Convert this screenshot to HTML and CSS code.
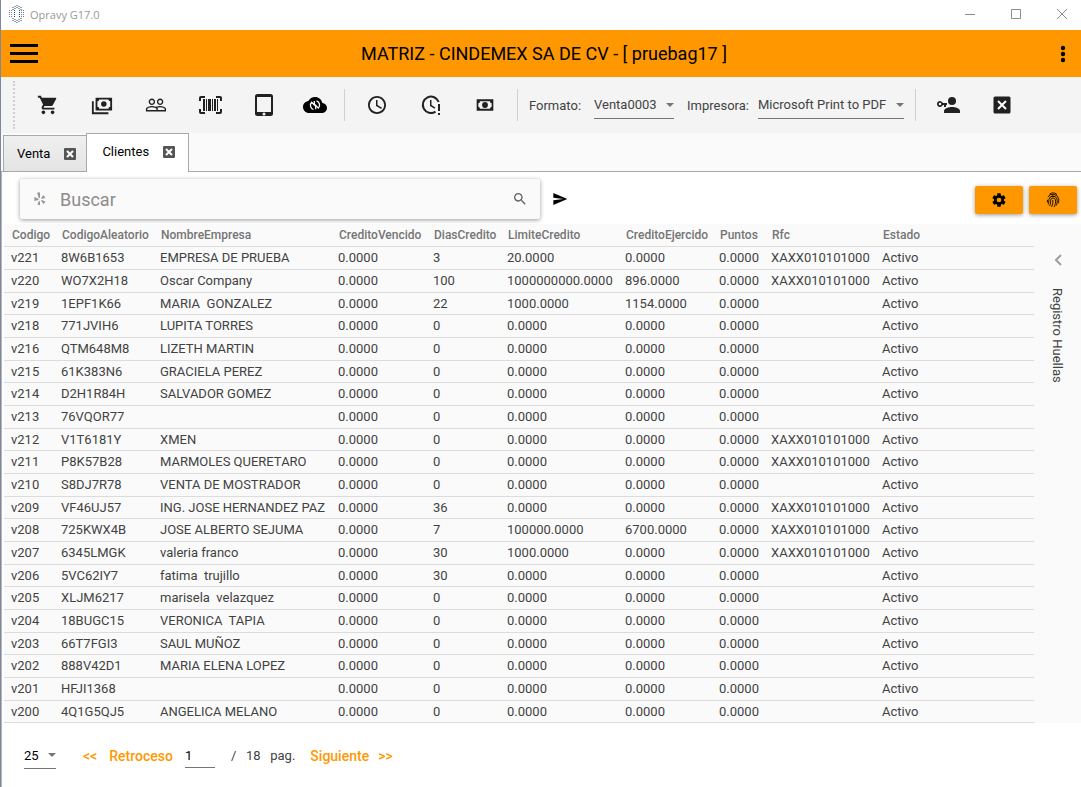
FILE: index.html
```html
<!DOCTYPE html>
<html lang="es">
<head>
    <meta charset="UTF-8">
    <meta name="viewport" content="width=device-width, initial-scale=1.0">
    <title>Opravy G17.0</title>
    <link rel="stylesheet" href="styles.css">
</head>
<body>

<div class="window">
    <div class="titlebar">
        <svg class="logo" width="18" height="18" viewBox="0 0 18 18" fill="none" stroke="#2d4a5c">
            <g stroke-dasharray="1 1">
                <path d="M5 2v3M7 1v3M9 0v3M11 1v3M13 2v3M5 13v3M7 14v3M9 15v3M11 14v3M13 13v3"/>
                <path d="M1 5.500h4M1 7.500h4M1 9.500h4M1 11.500h4M13 5.500h4M13 7.500h4M13 9.500h4M13 11.500h4" stroke="#6f8896"/>
                <path d="M6.500 5v8M11.500 5v8"/>
            </g>
        </svg>
        <span class="app-name">Opravy G17.0</span>
        <button class="win-btn" aria-label="Minimizar"><svg width="12" height="12" viewBox="0 0 12 12"><path d="M1 6.500h10"/></svg></button>
        <button class="win-btn" aria-label="Maximizar"><svg width="12" height="12" viewBox="0 0 12 12"><path d="M1.500 1.500h9v9h-9z"/></svg></button>
        <button class="win-btn" aria-label="Cerrar"><svg width="12" height="12" viewBox="0 0 12 12"><path d="M1 1l10 10M11 1L1 11"/></svg></button>
    </div>

    <header class="header">
        <button class="menu-btn" aria-label="Menu">
            <svg width="28" height="20" viewBox="0 0 28 20"><path d="M0 0h28v3H0zM0 8h28v3H0zM0 16h28v3H0z"/></svg>
        </button>
        <h1>MATRIZ - CINDEMEX SA DE CV - [ pruebag17 ]</h1>
        <button class="more-btn" aria-label="Opciones">
            <svg width="6" height="18" viewBox="0 0 6 18"><circle cx="3" cy="3" r="2.200"/><circle cx="3" cy="9" r="2.200"/><circle cx="3" cy="15" r="2.200"/></svg>
        </button>
    </header>

    <div class="toolbar">
        <span class="grip"></span>
        <button aria-label="Venta"><svg width="22" height="22" viewBox="0 0 24 24"><path d="M7 18c-1.100 0-1.990.9-1.990 2S5.900 22 7 22s2-.9 2-2-.9-2-2-2zM1 2v2h2l3.600 7.590-1.350 2.450c-.16.28-.25.61-.25.96 0 1.100.9 2 2 2h12v-2H7.420c-.14 0-.25-.11-.25-.25l.03-.12.9-1.630h7.450c.75 0 1.410-.41 1.750-1.030l3.580-6.490A1 1 0 0 0 20 4H5.210l-.94-2H1zm16 16c-1.100 0-1.990.9-1.990 2s.89 2 1.990 2 2-.9 2-2-.9-2-2-2z"/></svg></button>
        <button aria-label="Cobros"><svg width="22" height="22" viewBox="0 0 24 24"><path fill-rule="evenodd" d="M5 4h18v14H5zM9 6a2 2 0 0 1-2 2v6a2 2 0 0 1 2 2h10a2 2 0 0 1 2-2V8a2 2 0 0 1-2-2zM14 8a3 3 0 1 1 0 6 3 3 0 0 1 0-6zM1 8h2v12h16v2H1z"/></svg></button>
        <button aria-label="Clientes"><svg width="22" height="22" viewBox="0 0 24 24"><path d="M16.500 13c-1.200 0-3.070.34-4.500 1-1.430-.67-3.300-1-4.500-1C5.330 13 1 14.080 1 16.250V19h22v-2.750c0-2.170-4.330-3.250-6.500-3.250zm-4 4.500h-10v-1.250c0-.54 2.560-1.750 5-1.750s5 1.210 5 1.750v1.250zm9 0H14v-1.250c0-.46-.2-.86-.52-1.220.88-.3 1.960-.53 3.020-.53 2.440 0 5 1.210 5 1.750v1.250zM7.500 12c1.930 0 3.500-1.570 3.500-3.500S9.430 5 7.500 5 4 6.570 4 8.500 5.570 12 7.500 12zm0-5.500c1.100 0 2 .9 2 2s-.9 2-2 2-2-.9-2-2 .9-2 2-2zm9 5.500c1.930 0 3.500-1.570 3.500-3.500S18.430 5 16.500 5 13 6.570 13 8.500s1.570 3.500 3.500 3.500zm0-5.500c1.100 0 2 .9 2 2s-.9 2-2 2-2-.9-2-2 .9-2 2-2z"/></svg></button>
        <button aria-label="Codigo de barras"><svg width="24" height="24" viewBox="0 0 24 24"><path d="M5 6h2v12H5zm3 0h1v12H8zm2 0h3v12h-3zm4 0h1v12h-1zm2 0h2v12h-2zm3 0h1v12h-1zM3 5v3H1V5a2 2 0 0 1 2-2h4v2zm19-2a2 2 0 0 1 2 2v3h-2V5h-4V3zM3 16v3h4v2H3a2 2 0 0 1-2-2v-3zm19 3v-3h2v3a2 2 0 0 1-2 2h-4v-2z"/></svg></button>
        <button aria-label="Tableta"><svg width="24" height="24" viewBox="0 0 24 24"><path fill-rule="evenodd" d="M5.500 1h13A2.500 2.500 0 0 1 21 3.500v17a2.500 2.500 0 0 1-2.500 2.500h-13A2.500 2.500 0 0 1 3 20.500v-17A2.500 2.500 0 0 1 5.500 1zM5 4v15h14V4zM12 19.500a1.500 1.500 0 1 0 0 3 1.500 1.500 0 0 0 0-3z"/></svg></button>
        <button class="narrow" aria-label="Sincronizar"><svg width="24" height="24" viewBox="0 0 24 24"><path fill="#000" d="M19.350 10.040C18.670 6.590 15.640 4 12 4 9.110 4 6.600 5.640 5.350 8.040 2.340 8.360 0 10.910 0 14c0 3.310 2.690 6 6 6h13c2.760 0 5-2.240 5-5 0-2.640-2.050-4.780-4.650-4.960z"/><path fill="none" stroke="#fff" stroke-width="1.300" d="M10.500 16.500A4.500 4.500 0 0 1 8.600 9.200L11.300 12V8M13.500 7.800a4.500 4.500 0 0 1 1.900 7.300L12.700 12.300v4"/></svg></button>
        <span class="separator"></span>
        <button aria-label="Historial"><svg width="24" height="24" viewBox="0 0 24 24"><path d="M11.990 3C7 3 3 7 3 12s4 9 8.990 9C17 21 21 17 21 12s-4-9-9.010-9zM12 19.200a7.200 7.200 0 1 1 0-14.400 7.200 7.200 0 0 1 0 14.400zM12.500 7H11v6l5.200 3 .8-1.300-4.500-2.600z"/></svg></button>
        <button aria-label="Pendientes"><svg width="24" height="24" viewBox="0 0 24 24"><path fill="none" stroke="#212121" stroke-width="2" d="M16.500 18.700A8.200 8.200 0 1 1 19.700 9"/><path d="M12.500 7H11v6l4.500 2.800.8-1.300-3.800-2.400zM19 11h2v7h-2zM19 20h2v2h-2z"/></svg></button>
        <button aria-label="Caja"><svg width="20" height="20" viewBox="0 0 24 24"><path fill-rule="evenodd" d="M2 5h20v14H2zM6 7.500A2.500 2.500 0 0 1 4 10v4a2.500 2.500 0 0 1 2 2.500h12A2.500 2.500 0 0 1 20 14v-4a2.500 2.500 0 0 1-2-2.500zM12 8.500a3.500 3.500 0 1 1 0 7 3.500 3.500 0 0 1 0-7z"/></svg></button>
        <span class="separator"></span>
        <label for="formato">Formato:</label>
        <span class="select formato"><select id="formato"><option>Venta0003</option></select></span>
        <label for="impresora">Impresora:</label>
        <span class="select impresora"><select id="impresora"><option>Microsoft Print to PDF</option></select></span>
        <span class="separator"></span>
        <button aria-label="Cambiar usuario"><svg width="24" height="24" viewBox="0 0 24 24"><circle cx="16" cy="8" r="4"/><path d="M16 14c-3 0-8 1.300-8 4v2h16v-2c0-2.700-5-4-8-4z"/><path fill-rule="evenodd" d="M6.800 10A3 3 0 1 0 6.800 12H8v2h2v-2h1v-2zM4 9.700a1.300 1.300 0 1 1 0 2.600 1.300 1.300 0 0 1 0-2.600z"/></svg></button>
        <button aria-label="Cerrar ventana"><svg width="18" height="18" viewBox="0 0 18 18"><rect x=".5" y=".5" width="17" height="17" rx="1.500"/><path stroke="#fff" stroke-width="2" d="M5 5l8 8M13 5l-8 8"/></svg></button>
    </div>

    <nav class="tabs">
        <div class="tab">
            <a href="#venta">Venta</a>
            <button class="tab-close" aria-label="Cerrar Venta"><svg width="12" height="12" viewBox="0 0 12 12"><path d="M3 3l6 6M9 3L3 9"/></svg></button>
        </div>
        <div class="tab active">
            <a href="#clientes">Clientes</a>
            <button class="tab-close" aria-label="Cerrar Clientes"><svg width="12" height="12" viewBox="0 0 12 12"><path d="M3 3l6 6M9 3L3 9"/></svg></button>
        </div>
    </nav>

    <main class="panel">
        <div class="search-row">
            <div class="search">
                <svg width="12" height="14" viewBox="0 0 12 14" fill="#999"><path d="M3 .8L6 .2V6.300L4.800 6zM.4 5L4.500 6.800v1.300L.3 9zM5 9l1 .3v4L3.300 12.500zM7 8.800l1-.8 3.300 1.500-1.600 2.700zM7.200 6.300L9.200 3l2.300 2.800-3.700 1.200z"/></svg>
                <input type="text" placeholder="Buscar" aria-label="Buscar">
                <button class="icon-btn" aria-label="Buscar cliente"><svg width="16" height="16" viewBox="0 0 24 24" fill="#616161"><path d="M15.500 14h-.79l-.28-.27A6.470 6.470 0 0 0 16 9.500 6.500 6.500 0 1 0 9.500 16c1.610 0 3.090-.59 4.230-1.570l.27.28v.79l5 4.990L20.490 19l-4.990-5zm-6 0C7.010 14 5 11.990 5 9.500S7.010 5 9.500 5 14 7.010 14 9.500 11.990 14 9.500 14z"/></svg></button>
            </div>
            <button class="icon-btn send" aria-label="Enviar"><svg width="16" height="16" viewBox="0 0 24 24"><path d="M2.010 21L23 12 2.010 3 2 10l15 2-15 2z"/></svg></button>
            <button class="action" aria-label="Configuracion"><svg width="16" height="16" viewBox="0 0 24 24"><path d="M19.430 12.980c.04-.32.07-.64.07-.98s-.03-.66-.07-.98l2.110-1.650c.19-.15.24-.42.12-.64l-2-3.460c-.12-.22-.39-.3-.61-.22l-2.490 1c-.52-.4-1.080-.73-1.690-.98l-.38-2.650A.49.49 0 0 0 14 2h-4c-.25 0-.46.18-.49.42l-.38 2.650c-.61.25-1.170.59-1.690.98l-2.490-1c-.23-.09-.49 0-.61.22l-2 3.460c-.13.22-.07.49.12.64l2.110 1.650c-.04.32-.07.65-.07.98s.03.66.07.98l-2.110 1.650c-.19.15-.24.42-.12.64l2 3.460c.12.22.39.3.61.22l2.490-1c.52.4 1.080.73 1.690.98l.38 2.650c.03.24.24.42.49.42h4c.25 0 .46-.18.49-.42l.38-2.650c.61-.25 1.170-.59 1.690-.98l2.490 1c.23.09.49 0 .61-.22l2-3.460c.12-.22.07-.49-.12-.64zM12 15.500A3.500 3.500 0 1 1 12 8.500a3.500 3.500 0 0 1 0 7z"/></svg></button>
            <button class="action" aria-label="Huella"><svg width="14" height="16" viewBox="0 0 14 16" fill="none" stroke="#000" stroke-width=".9"><path d="M3.500 2.200A6 6 0 0 1 11 2.500M1.800 5A6 6 0 0 1 12.600 6.500c.3 1.700.2 3.200-.1 4.700M1.500 7.800c-.1 1 0 1.800-.1 2.700M2.200 12.500c.8-1.700.5-3.200.7-5A4.200 4.200 0 0 1 11 7c.4 2.300.2 4.500-.7 6.500M3.600 14c1.100-2 1-3.800 1-5.800a2.500 2.500 0 0 1 4.900-.3c.3 2.600-.2 4.700-1.300 7M5.600 15c1-2.200 1.300-4.300 1.300-7M4.800 4.700A4 4 0 0 1 9 4.600"/></svg></button>
        </div>

        <div class="content">
            <table class="clients">
                <colgroup>
                    <col class="c-codigo"><col class="c-aleatorio"><col class="c-nombre"><col class="c-vencido"><col class="c-dias"><col class="c-limite"><col class="c-ejercido"><col class="c-puntos"><col class="c-rfc"><col>
                </colgroup>
                <thead>
                    <tr><th>Codigo</th><th>CodigoAleatorio</th><th>NombreEmpresa</th><th>CreditoVencido</th><th>DiasCredito</th><th>LimiteCredito</th><th>CreditoEjercido</th><th>Puntos</th><th>Rfc</th><th>Estado</th></tr>
                </thead>
                <tbody id="rows"></tbody>
            </table>
            <aside class="side">
                <button class="icon-btn" aria-label="Abrir Registro Huellas"><svg width="8" height="12" viewBox="0 0 8 12" fill="none" stroke="#9e9e9e" stroke-width="2"><path d="M7 1L2 6l5 5"/></svg></button>
                <span>Registro Huellas</span>
            </aside>
        </div>

        <footer class="pager">
            <span class="select size"><select aria-label="Filas por pagina"><option>25</option></select></span>
            <button class="link first">&lt;&lt;</button>
            <button class="link prev">Retroceso</button>
            <input type="text" value="1" aria-label="Pagina">
            <span class="total">/&nbsp;&nbsp; 18 &nbsp; pag.</span>
            <button class="link next">Siguiente</button>
            <button class="link last">&gt;&gt;</button>
        </footer>
    </main>
</div>

<script>
    const RFC = 'XAXX010101000';

    // codigo, aleatorio, nombre, dias, limite, ejercido, rfc
    const clients = [
        ['v221', '8W6B1653', 'EMPRESA DE PRUEBA', '3', '20.0000', '0.0000', RFC],
        ['v220', 'WO7X2H18', 'Oscar Company', '100', '1000000000.0000', '896.0000', RFC],
        ['v219', '1EPF1K66', 'MARIA  GONZALEZ', '22', '1000.0000', '1154.0000', ''],
        ['v218', '771JVIH6', 'LUPITA TORRES', '0', '0.0000', '0.0000', ''],
        ['v216', 'QTM648M8', 'LIZETH MARTIN', '0', '0.0000', '0.0000', ''],
        ['v215', '61K383N6', 'GRACIELA PEREZ', '0', '0.0000', '0.0000', ''],
        ['v214', 'D2H1R84H', 'SALVADOR GOMEZ', '0', '0.0000', '0.0000', ''],
        ['v213', '76VQOR77', '', '0', '0.0000', '0.0000', ''],
        ['v212', 'V1T6181Y', 'XMEN', '0', '0.0000', '0.0000', RFC],
        ['v211', 'P8K57B28', 'MARMOLES QUERETARO', '0', '0.0000', '0.0000', RFC],
        ['v210', 'S8DJ7R78', 'VENTA DE MOSTRADOR', '0', '0.0000', '0.0000', ''],
        ['v209', 'VF46UJ57', 'ING. JOSE HERNANDEZ PAZ', '36', '0.0000', '0.0000', RFC],
        ['v208', '725KWX4B', 'JOSE ALBERTO SEJUMA', '7', '100000.0000', '6700.0000', RFC],
        ['v207', '6345LMGK', 'valeria franco', '30', '1000.0000', '0.0000', RFC],
        ['v206', '5VC62IY7', 'fatima  trujillo', '30', '0.0000', '0.0000', ''],
        ['v205', 'XLJM6217', 'marisela  velazquez', '0', '0.0000', '0.0000', ''],
        ['v204', '18BUGC15', 'VERONICA  TAPIA', '0', '0.0000', '0.0000', ''],
        ['v203', '66T7FGI3', 'SAUL MUÑOZ', '0', '0.0000', '0.0000', ''],
        ['v202', '888V42D1', 'MARIA ELENA LOPEZ', '0', '0.0000', '0.0000', ''],
        ['v201', 'HFJI1368', '', '0', '0.0000', '0.0000', ''],
        ['v200', '4Q1G5QJ5', 'ANGELICA MELANO', '0', '0.0000', '0.0000', '']
    ];

    const rows = document.getElementById('rows');
    for (const [codigo, aleatorio, nombre, dias, limite, ejercido, rfc] of clients) {
        const tr = rows.insertRow();
        for (const value of [codigo, aleatorio, nombre, '0.0000', dias, limite, ejercido, '0.0000', rfc, 'Activo']) {
            tr.insertCell().textContent = value;
        }
    }
</script>

</body>
</html>
```
FILE: styles.css
```css
* {
    box-sizing: border-box;
}

body {
    margin: 0;
    font-family: Roboto, "Liberation Sans", sans-serif;
    font-size: 13px;
    color: #424242;
    background-color: #fff;
}

button, input, select {
    font: inherit;
    color: inherit;
    background: none;
    border: none;
    padding: 0;
    margin: 0;
}

button {
    display: flex;
    align-items: center;
    justify-content: center;
    cursor: pointer;
}

.window {
    min-height: 100vh;
    border-left: 1px solid #7d86a5;
    display: flex;
    flex-direction: column;
}

/* Title bar */
.titlebar {
    height: 30px;
    display: flex;
    align-items: center;
    padding: 0 3px 2px 7px;
}

.app-name {
    flex: 1;
    margin-left: 4px;
    font-family: "Open Sans", "Noto Sans", sans-serif;
    font-size: 11px;
    color: #999;
}

.win-btn {
    width: 32px;
    height: 28px;
    margin-left: 14px;
}

.win-btn svg {
    fill: none;
    stroke: #8c8c8c;
}

/* Orange header */
.header {
    height: 47px;
    display: flex;
    align-items: center;
    padding: 0 15px 0 9px;
    background-color: #ff9800;
}

.header h1 {
    flex: 1;
    margin: 0;
    padding-right: 10px;
    text-align: center;
    font-size: 18px;
    font-weight: 400;
    color: #000;
}

/* Toolbar */
.toolbar {
    height: 56px;
    display: flex;
    align-items: center;
    padding-left: 12px;
    background-color: #f4f4f4;
}

.toolbar button {
    width: 54px;
    height: 36px;
}

.toolbar button.narrow {
    width: 48px;
}

.toolbar svg {
    fill: #212121;
}

.grip {
    height: 48px;
    border-left: 2px dotted #d0d0d0;
    margin-right: 6px;
}

.separator {
    width: 1px;
    height: 32px;
    margin: 0 5px;
    background-color: #d0d0d0;
}

.toolbar label {
    margin-left: 6px;
}

.select {
    position: relative;
    border-bottom: 1px solid #757575;
}

.select::after {
    content: "";
    position: absolute;
    right: 0;
    top: 50%;
    margin-top: -2px;
    border: 4px solid transparent;
    border-top-color: #757575;
    pointer-events: none;
}

.select select {
    width: 100%;
    height: 26px;
    appearance: none;
}

.formato {
    width: 80px;
    margin: 0 7px 0 13px;
}

.impresora {
    width: 146px;
    margin: 0 6px 0 9px;
}

/* Tabs */
.tabs {
    height: 39px;
    display: flex;
    align-items: flex-end;
    padding-left: 2px;
    background-color: #fafafa;
    border-bottom: 1px solid #a9a9a9;
}

.tab {
    height: 36px;
    display: flex;
    align-items: center;
    padding: 0 10px 0 13px;
    background: linear-gradient(#f0f0f0, #e4e4e4);
    border: 1px solid #a9a9a9;
    border-width: 1px 0 0 1px;
}

.tab a {
    color: #000;
    text-decoration: none;
}

.tab.active {
    height: 39px;
    margin-bottom: -1px;
    padding: 0 13px 3px 15px;
    background: #fff;
    border-right-width: 1px;
}

.tab-close {
    width: 12px;
    height: 12px;
    margin-left: 14px;
    border-radius: 1px;
    background-color: #555;
}

.tab-close svg {
    fill: none;
    stroke: #fff;
    stroke-width: 2;
}

/* Clients panel */
.panel {
    flex: 1;
    border-left: 1px solid #b5b5b5;
}

.search-row {
    height: 52px;
    display: flex;
    align-items: center;
    gap: 6px;
    padding: 4px 4px 0 18px;
}

.search {
    width: 520px;
    height: 40px;
    margin-bottom: 2px;
    display: flex;
    align-items: center;
    padding: 0 12px 0 14px;
    background-color: #fafafa;
    border-radius: 2px;
    box-shadow: 0 1px 4px rgba(0, 0, 0, 0.4);
}

.search input {
    flex: 1;
    min-width: 0;
    margin-left: 14px;
    font-size: 18px;
    outline: none;
}

.search input::placeholder {
    color: #8c8c8c;
}

.send {
    margin: 0 auto 2px 6px;
}

.action {
    width: 48px;
    height: 28px;
    background-color: #ff9800;
    border-radius: 2px;
    box-shadow: 0 1px 4px rgba(0, 0, 0, 0.4);
}

.content {
    display: flex;
    margin-left: 2px;
    background-color: #fafafa;
}

.clients {
    flex: 1;
    table-layout: fixed;
    border-collapse: separate;
    border-spacing: 0;
}

.c-codigo { width: 50px; }
.c-aleatorio { width: 99px; }
.c-nombre { width: 178px; }
.c-vencido { width: 95px; }
.c-dias { width: 74px; }
.c-limite { width: 118px; }
.c-ejercido { width: 94px; }
.c-puntos { width: 52px; }
.c-rfc { width: 111px; }

.clients th,
.clients td {
    height: 23px;
    padding: 0 0 0 7px;
    text-align: left;
    white-space: pre;
    line-height: 16px;
    border-bottom: 1px solid #dcdcdc;
}

.clients th {
    padding-left: 8px;
    font-size: 12px;
    font-weight: 500;
    color: #757575;
}

.clients tr:nth-child(3n) td {
    height: 22px;
}

.side {
    width: 47px;
    display: flex;
    flex-direction: column;
    align-items: center;
    padding-top: 30px;
}

.side span {
    margin-top: 22px;
    writing-mode: vertical-rl;
}

/* Pager */
.pager {
    display: flex;
    align-items: center;
    padding: 19px 22px;
}

.size {
    width: 32px;
    color: #000;
}

.pager input {
    width: 30px;
    height: 24px;
    margin-left: 12px;
    color: #000;
    border-bottom: 1px solid #757575;
}

.link {
    color: #ff9800;
    font-size: 14px;
    font-weight: 500;
}

.first {
    margin-left: 27px;
}

.prev {
    margin-left: 12px;
}

.last {
    margin-left: 9px;
}

.total {
    margin-left: 16px;
}

.next {
    margin-left: 15px;
}
```
